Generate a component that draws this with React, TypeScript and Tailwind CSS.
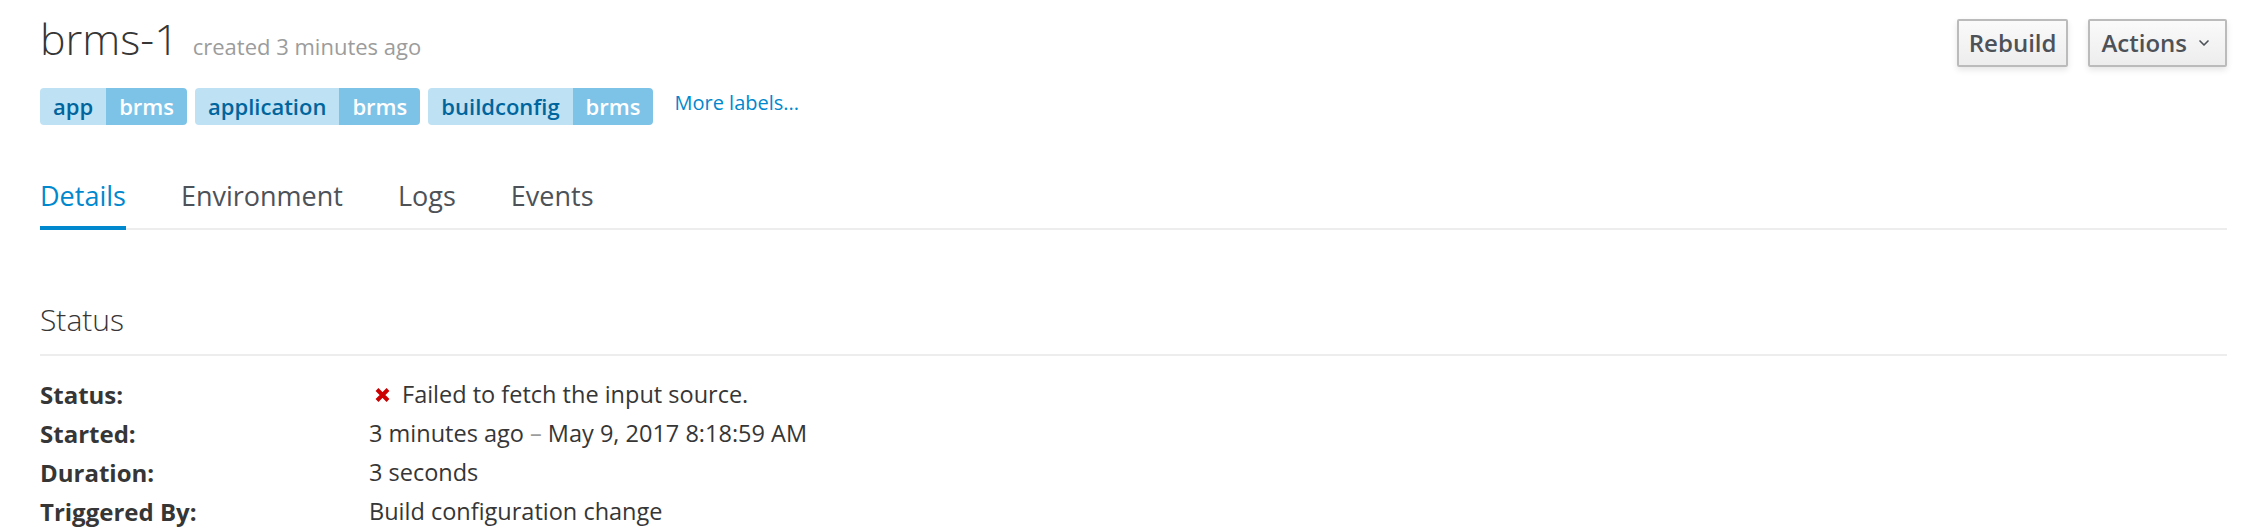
import { ChevronDown } from "lucide-react";

const labels = [
  { key: "app", value: "brms" },
  { key: "application", value: "brms" },
  { key: "buildconfig", value: "brms" },
];

const tabs = ["Details", "Environment", "Logs", "Events"];

const FailedIcon = () => (
  <svg width="17" height="16" viewBox="0 0 17 16" className="shrink-0">
    <path
      d="M3 2.5 L14 13.5 M14 2.5 L3 13.5"
      stroke="#cc0000"
      strokeWidth="4"
      strokeLinecap="butt"
    />
  </svg>
);

const Button = ({ children }: { children: React.ReactNode }) => (
  <button className="flex h-[48px] items-center rounded-[2px] border-2 border-[#bbbbbb] bg-gradient-to-b from-[#fafafa] to-[#ededed] text-[24px] font-semibold text-[#4d5258] shadow-[0_3px_6px_rgba(3,3,3,0.1)]">
    {children}
  </button>
);

export default function App() {
  return (
    <div className="min-h-[530px] bg-white pl-[40px] pr-[33px] pt-[14px] font-['Open_Sans',sans-serif] text-[#363636]">
      {/* header */}
      <div className="flex items-start justify-between">
        <div>
          <h1 className="flex items-baseline text-[43px] font-light leading-[50px] text-[#363636]">
            brms-1
            <small className="ml-[14px] text-[22px] font-normal text-[#9c9c9c]">
              created 3 minutes ago
            </small>
          </h1>
          <div className="mt-[17px] flex items-start gap-[8px]">
            {labels.map((l) => (
              <div
                key={l.key}
                className="flex h-[37px] overflow-hidden rounded-[4px] text-[22px] font-semibold leading-[37px]"
              >
                <span className="bg-[#bee1f4] px-[13px] text-[#00659c]">
                  {l.key}
                </span>
                <span className="bg-[#7dc3e8] px-[13px] text-white">
                  {l.value}
                </span>
              </div>
            ))}
            <a className="ml-[13px] mt-[-4px] text-[20px] leading-[37px] text-[#0088ce]">
              More labels...
            </a>
          </div>
        </div>
        <div className="mt-[5px] flex gap-[20px]">
          <Button>
            <span className="px-[10px]">Rebuild</span>
          </Button>
          <Button>
            <span className="pl-[11px]">Actions</span>
            <ChevronDown
              className="ml-[9px] mr-[13px]"
              size={16}
              strokeWidth={2.5}
            />
          </Button>
        </div>
      </div>

      {/* tabs */}
      <div className="mt-[51px] flex gap-[55px] border-b-2 border-[#ededed]">
        {tabs.map((t, i) => (
          <div
            key={t}
            className={
              i === 0
                ? "-mb-[2px] border-b-4 border-[#0088ce] pb-[10px] text-[27px] leading-[40px] text-[#0088ce]"
                : "-mb-[2px] border-b-4 border-transparent pb-[10px] text-[27px] leading-[40px] text-[#4d5258]"
            }
          >
            {t}
          </div>
        ))}
      </div>

      {/* status section */}
      <h3 className="mt-[70px] border-b-2 border-[#ededed] pb-[14px] text-[30px] font-light leading-[40px]">
        Status
      </h3>
      <dl className="mt-[19px] grid grid-cols-[329px_1fr] text-[24px] leading-[39px]">
        <dt className="font-bold">Status:</dt>
        <dd className="flex items-center text-[23.5px]">
          <span className="ml-[5px] mr-[11px] flex">
            <FailedIcon />
          </span>
          Failed to fetch the input source.
        </dd>
        <dt className="font-bold">Started:</dt>
        <dd className="text-[23.5px]">
          3 minutes ago <span className="text-[#9c9c9c]">–</span> May 9, 2017
          8:18:59 AM
        </dd>
        <dt className="font-bold">Duration:</dt>
        <dd className="text-[23.5px]">3 seconds</dd>
        <dt className="font-bold">Triggered By:</dt>
        <dd className="text-[23.5px]">Build configuration change</dd>
      </dl>
    </div>
  );
}
